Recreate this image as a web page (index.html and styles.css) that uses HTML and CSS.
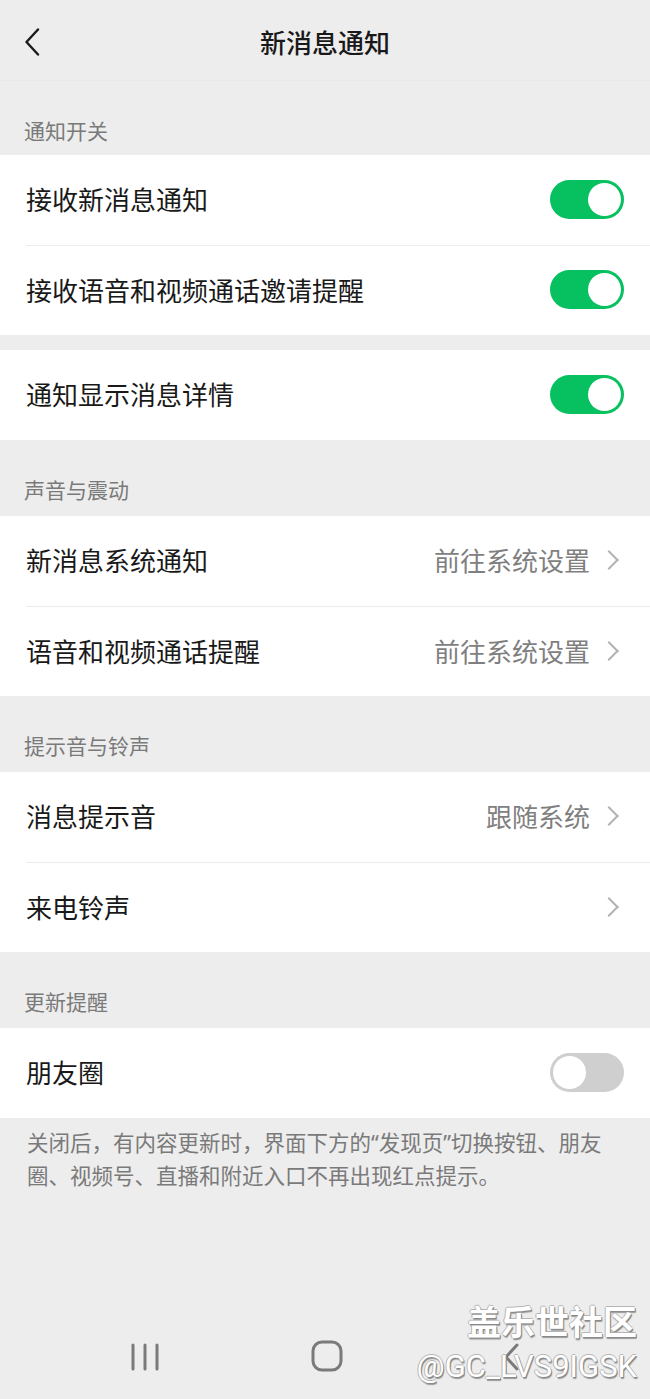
FILE: index.html
```html
<!DOCTYPE html>
<html lang="zh-CN">
<head>
<meta charset="utf-8">
<title>新消息通知</title>
<link rel="stylesheet" href="styles.css">
</head>
<body>
<div class="screen">
  <header class="topbar">
    <svg class="back" width="16" height="28" viewBox="0 0 16 28"><path d="M14 1.5 L2.5 14 L14 26.5" fill="none" stroke="#1a1a1a" stroke-width="2.4" stroke-linecap="round" stroke-linejoin="round"/></svg>
    <h1 class="title">新消息通知</h1>
  </header>

  <div class="section-label first">通知开关</div>
  <div class="card">
    <div class="row"><span class="label">接收新消息通知</span><span class="switch on"></span></div>
    <div class="row"><span class="label">接收语音和视频通话邀请提醒</span><span class="switch on"></span></div>
  </div>
  <div class="gap"></div>
  <div class="card">
    <div class="row"><span class="label">通知显示消息详情</span><span class="switch on"></span></div>
  </div>

  <div class="section-label">声音与震动</div>
  <div class="card">
    <div class="row"><span class="label">新消息系统通知</span><span class="value">前往系统设置</span><span class="chev"></span></div>
    <div class="row"><span class="label">语音和视频通话提醒</span><span class="value">前往系统设置</span><span class="chev"></span></div>
  </div>

  <div class="section-label">提示音与铃声</div>
  <div class="card">
    <div class="row"><span class="label">消息提示音</span><span class="value">跟随系统</span><span class="chev"></span></div>
    <div class="row"><span class="label">来电铃声</span><span class="value"></span><span class="chev"></span></div>
  </div>

  <div class="section-label">更新提醒</div>
  <div class="card">
    <div class="row"><span class="label">朋友圈</span><span class="switch"></span></div>
  </div>
  <p class="note">关闭后，有内容更新时，界面下方的“发现页”切换按钮、朋友圈、视频号、直播和附近入口不再出现红点提示。</p>

  <div class="spacer"></div>

  <nav class="navbar">
    <svg class="nav-recent" width="30" height="28" viewBox="0 0 30 28"><g stroke="#7a7a7a" stroke-width="3" stroke-linecap="round"><path d="M3 2V26"/><path d="M15 2V26"/><path d="M27 2V26"/></g></svg>
    <svg class="nav-home" width="32" height="32" viewBox="0 0 32 32"><rect x="2" y="2" width="28" height="28" rx="9" fill="none" stroke="#7a7a7a" stroke-width="3"/></svg>
    <svg class="nav-back" width="18" height="28" viewBox="0 0 18 28"><path d="M15 2 L4 14 L15 26" fill="none" stroke="#7a7a7a" stroke-width="3" stroke-linecap="round" stroke-linejoin="round"/></svg>
    <div class="watermark">
      <div class="wm-1">盖乐世社区</div>
      <div class="wm-2">@GC_LVS9IGSK</div>
    </div>
  </nav>
</div>
</body>
</html>
```

FILE: styles.css
```css
* { box-sizing: border-box; }
html, body { margin: 0; padding: 0; }
body {
  background: #ededed;
  font-family: "Noto Sans CJK SC", "Noto Sans", sans-serif;
  color: #191919;
}
.screen {
  width: 650px;
  height: 1399px;
  display: flex;
  flex-direction: column;
  background: #ededed;
  overflow: hidden;
}
.topbar {
  height: 81px;
  display: flex;
  align-items: center;
  justify-content: center;
  position: relative;
  border-bottom: 1px solid #e8e8e8;
}
.back {
  position: absolute;
  left: 24px;
  top: 28px;
}
.title {
  margin: 0;
  font-size: 26px;
  font-weight: 500;
  color: #191919;
  margin-top: 2px;
}
.section-label {
  height: 76px;
  padding: 26px 0 0 24px;
  font-size: 21px;
  line-height: 46px;
  color: #7a7a7a;
}
.section-label.first { height: 74px; }
.card {
  background: #fff;
}
.row {
  height: 90px;
  margin-left: 26px;
  padding-right: 26px;
  display: flex;
  align-items: center;
  border-top: 1px solid #ececec;
}
.row:first-child { border-top: none; }
.label {
  flex: 1;
  font-size: 26px;
  color: #191919;
  margin-top: -3px;
}
.value {
  font-size: 26px;
  color: #7f7f7f;
  margin-right: 12px;
  margin-top: -3px;
}
.chev {
  width: 14px;
  height: 14px;
  border-top: 2px solid #b2b2b2;
  border-right: 2px solid #b2b2b2;
  transform: rotate(45deg);
  margin-right: 8px;
  margin-top: -2px;
}
.switch {
  width: 74px;
  height: 39px;
  border-radius: 20px;
  background: #cfcfcf;
  position: relative;
  margin-top: -2px;
}
.switch::after {
  content: "";
  position: absolute;
  top: 3px;
  left: 3px;
  width: 33px;
  height: 33px;
  border-radius: 50%;
  background: #fff;
}
.switch.on { background: #07c160; }
.switch.on::after { left: 38px; }
.gap { height: 15px; }
.note {
  margin: 0;
  padding: 8px 30px 0 27px;
  font-family: "Noto Sans", "Noto Sans CJK SC", sans-serif;
  font-size: 21.5px;
  line-height: 33px;
  color: #7a7a7a;
}
.spacer { flex: 1; }
.navbar {
  height: 100px;
  position: relative;
}
.nav-recent { position: absolute; left: 130px; top: 44px; }
.nav-home { position: absolute; left: 311px; top: 41px; }
.nav-back { position: absolute; left: 502px; top: 44px; }
.watermark {
  position: absolute;
  right: 13px;
  top: -3px;
  display: flex;
  flex-direction: column;
  align-items: flex-end;
  gap: 4px;
  color: #fff;
  text-shadow: 1px 1px 0 #8a8a8a, -1px 0 0 #b5b5b5, 0 -1px 0 #b5b5b5, 1px 2px 1px #999;
}
.wm-1 {
  font-family: "Noto Sans CJK SC", sans-serif;
  font-size: 34px;
  font-weight: 700;
  line-height: 49px;
}
.wm-2 {
  font-family: Roboto, "Noto Sans", sans-serif;
  font-size: 31px;
  line-height: 36px;
}
```
